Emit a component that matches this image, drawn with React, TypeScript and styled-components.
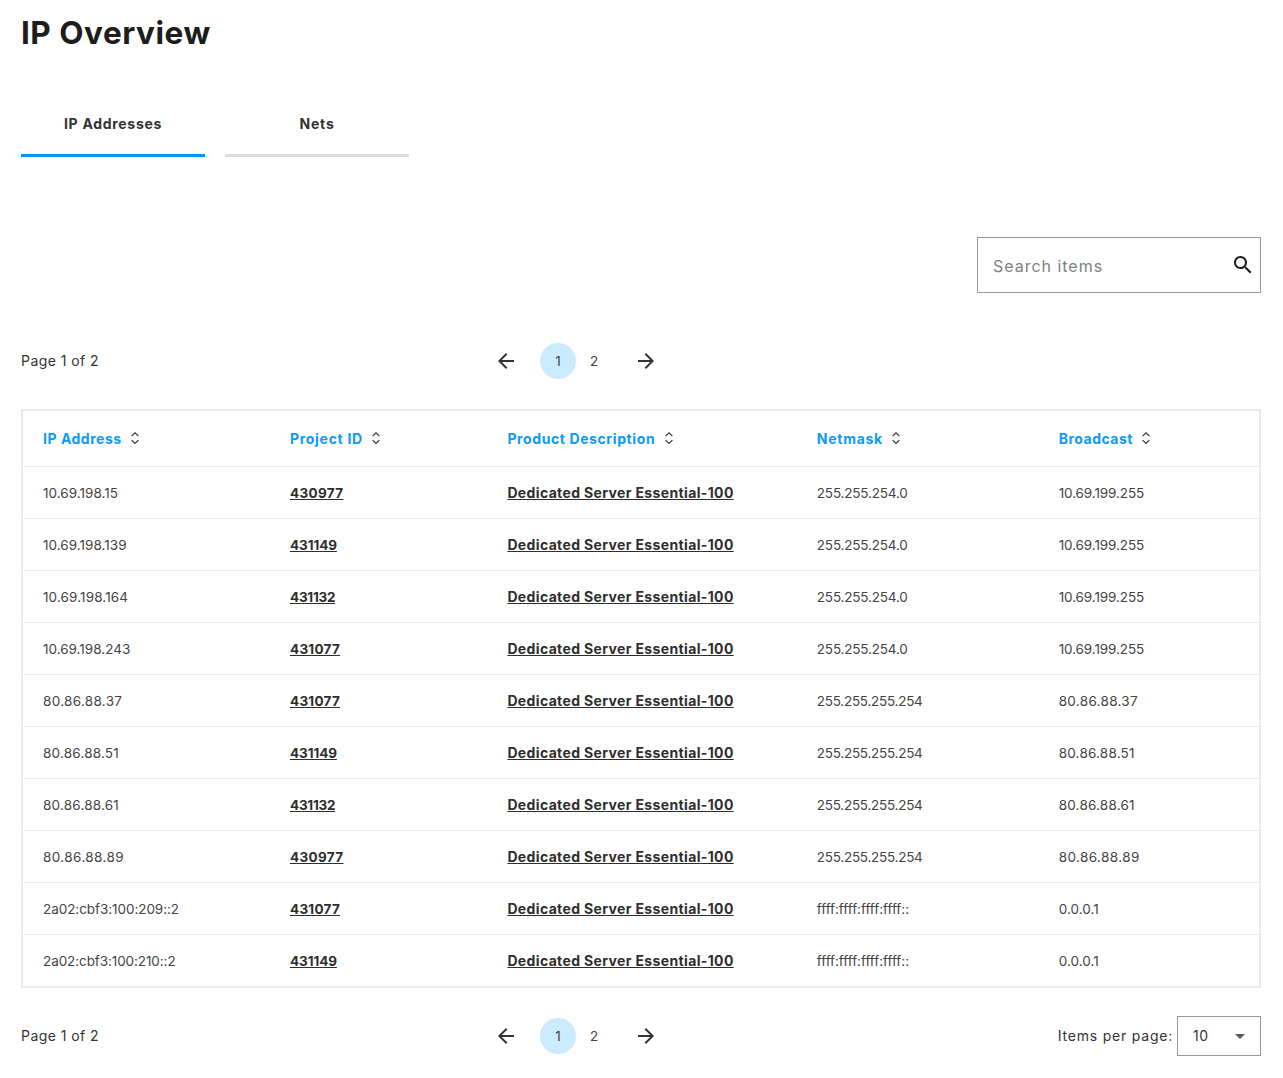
import React from 'react';
import styled, { createGlobalStyle, css } from 'styled-components';

const GlobalStyle = createGlobalStyle`
  *, *::before, *::after { box-sizing: border-box; }
  body {
    margin: 0;
    background: #fff;
    color: #333;
    font-family: Inter, "Liberation Sans", sans-serif;
    font-size: 13.5px;
    line-height: 20px;
  }
`;

type Tracked = { $track?: number };

const tracking = css<Tracked>`
  letter-spacing: ${({ $track = 0 }) => $track}px;
`;

const Page = styled.main`
  display: flex;
  flex-direction: column;
  width: 1283px;
  height: 1078px;
  padding: 13px 22px 0 21px;
  overflow: hidden;
`;

const Title = styled.h1`
  margin: 0;
  color: #1d1d1d;
  font-size: 31.5px;
  font-weight: 700;
  line-height: 40px;
  letter-spacing: 0.53px;
`;

const Tabs = styled.div`
  display: flex;
  gap: 20px;
  margin-top: 61px;
`;

const Tab = styled.button<Tracked & { $active?: boolean }>`
  width: 184px;
  height: 43px;
  padding: 0 0 20px;
  border: 0;
  border-bottom: 3px solid ${({ $active }) => ($active ? '#0099fa' : '#dcdcdc')};
  background: none;
  color: #333;
  font: 700 14px/20px Inter, "Liberation Sans", sans-serif;
  ${tracking}
`;

const SearchBox = styled.label`
  display: flex;
  align-items: center;
  align-self: flex-end;
  width: 284px;
  height: 56px;
  margin-top: 80px;
  padding: 0 5px 0 15px;
  border: 1px solid #999;
`;

const SearchInput = styled.input`
  flex: 1;
  min-width: 0;
  height: 24px;
  margin-top: 2px;
  padding: 0;
  border: 0;
  outline: 0;
  background: none;
  font: 400 16px/24px Inter, "Liberation Sans", sans-serif;
  letter-spacing: 0.98px;
  &::placeholder { color: #7f7f7f; opacity: 1; }
`;

const PagerBar = styled.div<{ $top: number }>`
  display: grid;
  grid-template-columns: 473px 1fr auto;
  align-items: center;
  height: 40px;
  margin-top: ${({ $top }) => $top}px;
`;

const PageStatus = styled.span`
  font-size: 14px;
  letter-spacing: 0.44px;
`;

const Pager = styled.nav`
  display: flex;
  align-items: center;
`;

const PageNumber = styled.button<{ $active?: boolean }>`
  width: 36px;
  height: 36px;
  padding: 0;
  border: 0;
  border-radius: 50%;
  background: ${({ $active }) => ($active ? '#cbebfe' : 'transparent')};
  color: #444;
  font: 400 13.5px/20px Inter, "Liberation Sans", sans-serif;
`;

const ArrowButton = styled.button<{ $side: 'prev' | 'next' }>`
  display: flex;
  padding: 0;
  border: 0;
  background: none;
  margin: ${({ $side }) => ($side === 'prev' ? '0 22px 0 0' : '0 0 0 22px')};
`;

const PageSize = styled.div`
  display: flex;
  align-items: center;
  gap: 4px;
`;

const PageSizeLabel = styled.span`
  font-size: 14px;
  letter-spacing: 0.78px;
`;

const SelectBox = styled.button`
  display: flex;
  align-items: center;
  justify-content: space-between;
  width: 84px;
  height: 40px;
  padding: 0 8px 0 15px;
  border: 1px solid #999;
  background: #fff;
  color: #333;
  font: 400 14px/20px Inter, "Liberation Sans", sans-serif;
  letter-spacing: 0.5px;
`;

const Table = styled.div`
  margin-top: 28px;
  border: 2px solid #e8ecec;
`;

const rowGrid = css`
  display: grid;
  grid-template-columns: 247px 217.4px 309.4px 241.9px 1fr;
  align-items: center;
  padding-left: 20px;
`;

const HeaderRow = styled.div`
  ${rowGrid}
  height: 56px;
  border-bottom: 1px solid #e8ecec;
`;

const Row = styled.div`
  ${rowGrid}
  height: 52px;
  border-bottom: 1px solid #e8ecec;
  &:last-child { height: 51px; border-bottom: 0; }
`;

const HeaderCell = styled.button<Tracked>`
  display: flex;
  align-items: center;
  gap: 8.5px;
  padding: 0;
  border: 0;
  background: none;
  color: #0c9bf5;
  font: 700 14px/20px Inter, "Liberation Sans", sans-serif;
  ${tracking}
`;

const SortGlyph = styled.svg`
  margin-top: -1px;
`;

const Cell = styled.span<Tracked>`
  color: #444;
  ${tracking}
`;

const CellLink = styled.a<Tracked & { $size?: number }>`
  justify-self: start;
  color: #2e2e2e;
  font-size: ${({ $size = 13.5 }) => $size}px;
  font-weight: 700;
  text-decoration: underline;
  text-decoration-thickness: 1px;
  text-underline-offset: 1px;
  text-decoration-skip-ink: none;
  ${tracking}
`;

const SortIcon = () => (
  <SortGlyph width="10" height="14" viewBox="0 0 10 14" fill="none" stroke="#333" strokeWidth="1.2">
    <path d="M1.6 5.1 5 1.8l3.4 3.3M1.6 9.1 5 12.4l3.4-3.3" />
  </SortGlyph>
);

const MaterialIcon = ({ path, color = '#333' }: { path: string; color?: string }) => (
  <svg width="24" height="24" viewBox="0 0 24 24" fill={color}>
    <path d={path} />
  </svg>
);

const icons = {
  back: 'M20 11H7.83l5.59-5.59L12 4l-8 8 8 8 1.41-1.41L7.83 13H20v-2z',
  forward: 'M12 4l-1.41 1.41L16.17 11H4v2h12.17l-5.58 5.59L12 20l8-8z',
  search:
    'M15.5 14h-.79l-.28-.27C15.41 12.59 16 11.11 16 9.5 16 5.91 13.09 3 9.5 3S3 5.91 3 9.5 5.91 16 9.5 16c1.61 0 3.09-.59 4.23-1.57l.27.28v.79l5 4.99L20.49 19l-4.99-5zm-6 0C7.01 14 5 11.99 5 9.5S7.01 5 9.5 5 14 7.01 14 9.5 11.99 14 9.5 14z',
  dropDown: 'M7 10l5 5 5-5z',
};

const columns = [
  { label: 'IP Address', track: 0.52 },
  { label: 'Project ID', track: 0.7 },
  { label: 'Product Description', track: 0.6 },
  { label: 'Netmask', track: 0.74 },
  { label: 'Broadcast', track: 0.5 },
];

const trackByValue: Record<string, number> = {
  '10.69.198.15': 0.03,
  '10.69.198.139': 0.03,
  '10.69.198.164': 0.12,
  '80.86.88.37': 0.31,
  '80.86.88.51': 0.2,
  '80.86.88.61': 0.2,
  '80.86.88.89': 0.4,
  '2a02:cbf3:100:209::2': -0.06,
  '2a02:cbf3:100:210::2': -0.09,
  '430977': 0.34,
  '431149': -0.08,
  '431132': -0.24,
  '431077': 0.26,
  '255.255.254.0': -0.17,
  '255.255.255.254': -0.26,
  'ffff:ffff:ffff:ffff::': -0.04,
  '10.69.199.255': -0.1,
  '0.0.0.1': 0.05,
};

const product = 'Dedicated Server Essential-100';

const records = [
  ['10.69.198.15', '430977', '255.255.254.0', '10.69.199.255'],
  ['10.69.198.139', '431149', '255.255.254.0', '10.69.199.255'],
  ['10.69.198.164', '431132', '255.255.254.0', '10.69.199.255'],
  ['10.69.198.243', '431077', '255.255.254.0', '10.69.199.255'],
  ['80.86.88.37', '431077', '255.255.255.254', '80.86.88.37'],
  ['80.86.88.51', '431149', '255.255.255.254', '80.86.88.51'],
  ['80.86.88.61', '431132', '255.255.255.254', '80.86.88.61'],
  ['80.86.88.89', '430977', '255.255.255.254', '80.86.88.89'],
  ['2a02:cbf3:100:209::2', '431077', 'ffff:ffff:ffff:ffff::', '0.0.0.1'],
  ['2a02:cbf3:100:210::2', '431149', 'ffff:ffff:ffff:ffff::', '0.0.0.1'],
];

const Pagination = ({ top, children }: { top: number; children?: React.ReactNode }) => (
  <PagerBar $top={top}>
    <PageStatus>Page 1 of 2</PageStatus>
    <Pager>
      <ArrowButton $side="prev" aria-label="Previous page">
        <MaterialIcon path={icons.back} />
      </ArrowButton>
      <PageNumber $active>1</PageNumber>
      <PageNumber>2</PageNumber>
      <ArrowButton $side="next" aria-label="Next page">
        <MaterialIcon path={icons.forward} />
      </ArrowButton>
    </Pager>
    {children}
  </PagerBar>
);

export default function App() {
  return (
    <Page>
      <GlobalStyle />
      <Title>IP Overview</Title>
      <Tabs>
        <Tab $active $track={0.7}>IP Addresses</Tab>
        <Tab $track={0.8}>Nets</Tab>
      </Tabs>
      <SearchBox>
        <SearchInput placeholder="Search items" />
        <MaterialIcon path={icons.search} color="#1d1d1d" />
      </SearchBox>
      <Pagination top={48} />
      <Table>
        <HeaderRow>
          {columns.map(({ label, track }) => (
            <HeaderCell key={label} $track={track}>
              {label}
              <SortIcon />
            </HeaderCell>
          ))}
        </HeaderRow>
        {records.map(([ip, project, netmask, broadcast]) => (
          <Row key={ip}>
            <Cell $track={trackByValue[ip]}>{ip}</Cell>
            <CellLink href="#" $track={trackByValue[project]}>{project}</CellLink>
            <CellLink href="#" $size={14} $track={0.36}>{product}</CellLink>
            <Cell $track={trackByValue[netmask]}>{netmask}</Cell>
            <Cell $track={trackByValue[broadcast]}>{broadcast}</Cell>
          </Row>
        ))}
      </Table>
      <Pagination top={28}>
        <PageSize>
          <PageSizeLabel>Items per page:</PageSizeLabel>
          <SelectBox>
            10
            <MaterialIcon path={icons.dropDown} color="#555" />
          </SelectBox>
        </PageSize>
      </Pagination>
    </Page>
  );
}
